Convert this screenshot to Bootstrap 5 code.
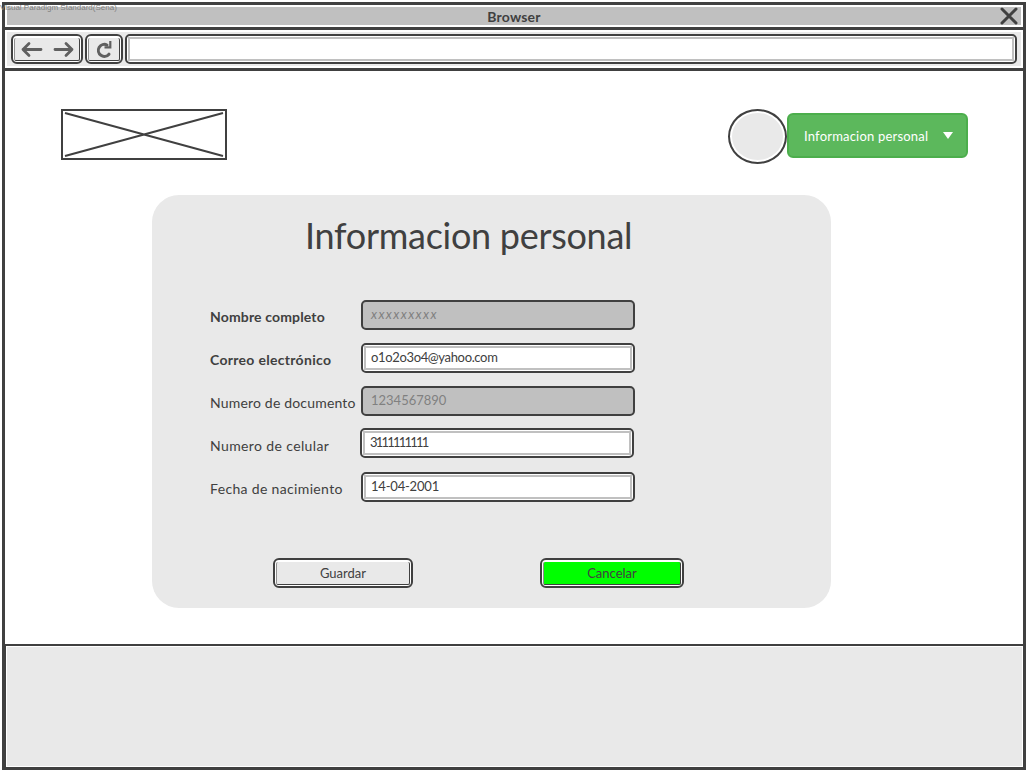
<!DOCTYPE html>
<html lang="es">
<head>
<meta charset="utf-8">
<meta name="viewport" content="width=device-width, initial-scale=1">
<title>Informacion personal</title>
<link href="https://cdn.jsdelivr.net/npm/bootstrap@5.3.0/dist/css/bootstrap.min.css" rel="stylesheet">
<style>
:root{--ink:#404040;--soft:#e9e9e9;--mid:#c0c0c0}
body{font-family:Lato,"Liberation Sans",sans-serif;color:var(--ink);background:#fff;height:774px;overflow:hidden;font-size:13px;line-height:20px}
.win{width:1024px;height:768px;margin:2px 0 0 2px;border:3px solid var(--ink)}
.watermark{left:0;top:3px;font:8px/10px "Liberation Sans",sans-serif;color:#808080;white-space:nowrap}
.titlebar{height:25px;padding:2px;border-bottom:3px solid var(--ink)}
.titlebar>div{background:var(--mid);height:18px;font-size:14px;line-height:20px}
.close-x{right:3px;top:0}
.toolbar{height:41px;padding:2px;border-bottom:3px solid var(--ink)}
.toolbar>div{background:var(--soft);height:34px;padding:2px 4px;gap:2px}
.sk-btn{border:2px solid var(--ink);border-radius:6px;background:#fff;padding:2px 1px 1px;height:30px}
.sk-btn>span{background:var(--soft);border:solid var(--ink);border-width:0 1px 1px;border-left-color:#909090;border-radius:2px;height:100%;width:100%;display:flex;align-items:center;justify-content:center}
.sk-btn.go>span{background:#0f0}
.sk-field{border:2px solid var(--ink);border-radius:5px;background:#fff;padding:1px;height:30px}
.sk-field>span{display:block;height:100%;border:2px solid var(--mid);padding-left:5px;line-height:18px;white-space:nowrap}
.sk-field.off{background:var(--mid);color:#808080}
.page-area{height:573px}
.page-head{padding:38px 55px 0 56px;height:124px}
.logo-box{width:166px;height:51px;border:2px solid var(--ink)}
.avatar{width:59px;height:55px;border:2px solid var(--ink);border-radius:50%;background:var(--soft);box-shadow:inset 0 0 0 2px #fff}
.user-menu,.user-menu:hover{width:181px;height:45px;margin-top:4px;background:#5cb85c;border:2px solid #4cae4c;border-radius:6px;color:#fff;padding:0 13px 0 15px;font-size:13px;letter-spacing:.2px}
.user-menu span{padding-top:3px}
.panel{width:679px;height:413px;border-radius:27px;background:var(--soft);margin-left:147px;padding:18px 0 0 58px}
.panel h1{font-size:36px;line-height:44px;margin:0 0 43px 95px;letter-spacing:-.28px;font-weight:400;white-space:nowrap}
.line{display:flex;height:43px}
.line label{width:151px;font-size:14px;line-height:20px;padding-top:7px;white-space:nowrap}
.line .sk-field{width:274px}
.actions{margin:43px 0 0 63px;gap:127px}
.foot-wrap{border:solid var(--ink);border-width:2px 0 0 1px;padding:1px;height:123px}
.foot{height:119px;background:var(--soft)}
</style>
</head>
<body>
<div class="win position-relative">
  <div class="titlebar">
    <div class="text-center fw-bold position-relative"><span style="letter-spacing:.2px">Browser</span>
      <svg class="close-x position-absolute" width="18" height="18" viewBox="0 0 18 18"><path d="M2 2 16 16M16 2 2 16" stroke="#404040" stroke-width="3" stroke-linecap="round"/></svg>
    </div>
  </div>
  <div class="toolbar">
    <div class="d-flex">
      <div class="sk-btn" style="width:72px"><span><svg width="54" height="18" viewBox="0 0 54 18" fill="none" stroke="#606060" stroke-width="2.8" stroke-linecap="round" stroke-linejoin="round"><path d="M21 9.5H3M9 3.5 3 9.5l6 6M35 9.5h17M46 3.5l6 6-6 6"/></svg></span></div>
      <div class="sk-btn" style="width:38px"><span><svg width="18" height="20" viewBox="0 0 18 20" fill="none" stroke="#606060"><path d="M14 15.2A6 6 0 1 1 12 6" stroke-width="3" stroke-linecap="round"/><path d="M15.3 2v6.3H9.5" stroke-width="2.2"/></svg></span></div>
      <div class="sk-field flex-grow-1"><span></span></div>
    </div>
  </div>
  <main class="page-area">
    <header class="page-head d-flex align-items-start">
      <svg class="logo-box me-auto" viewBox="0 0 162 47"><path d="M2 2 160 45M160 2 2 45" stroke="#404040" stroke-width="2"/></svg>
      <div class="avatar"></div>
      <button class="user-menu btn d-flex align-items-center justify-content-between"><span>Informacion personal</span><svg width="10" height="7" viewBox="0 0 10 7"><path d="M0 0h10L5 7z" fill="#fff"/></svg></button>
    </header>
    <section class="panel">
      <h1>Informacion personal</h1>
      <div class="line"><label style="letter-spacing:.15px" class="fw-bold">Nombre completo</label><div class="sk-field off"><span class="fst-italic" style="letter-spacing:1.4px">xxxxxxxxx</span></div></div>
      <div class="line"><label style="letter-spacing:.3px" class="fw-bold">Correo electrónico</label><div class="sk-field"><span style="letter-spacing:-.35px">o1o2o3o4@yahoo.com</span></div></div>
      <div class="line" style="height:42px"><label style="letter-spacing:.18px">Numero de documento</label><div class="sk-field off"><span>1234567890</span></div></div>
      <div class="line" style="height:44px"><label style="width:150px;padding-top:8px;letter-spacing:.38px">Numero de celular</label><div class="sk-field"><span style="letter-spacing:-1.8px">3111111111</span></div></div>
      <div class="line"><label style="letter-spacing:.34px">Fecha de nacimiento</label><div class="sk-field"><span style="letter-spacing:-.2px">14-04-2001</span></div></div>
      <div class="actions d-flex">
        <div class="sk-btn" style="width:140px"><span>Guardar</span></div>
        <div class="sk-btn go" style="width:144px"><span>Cancelar</span></div>
      </div>
    </section>
  </main>
  <div class="foot-wrap"><footer class="foot"></footer></div>
</div>
<div class="watermark position-absolute">Visual Paradigm Standard(Sena)</div>
<script src="https://cdn.jsdelivr.net/npm/bootstrap@5.3.0/dist/js/bootstrap.bundle.min.js"></script>
</body>
</html>
